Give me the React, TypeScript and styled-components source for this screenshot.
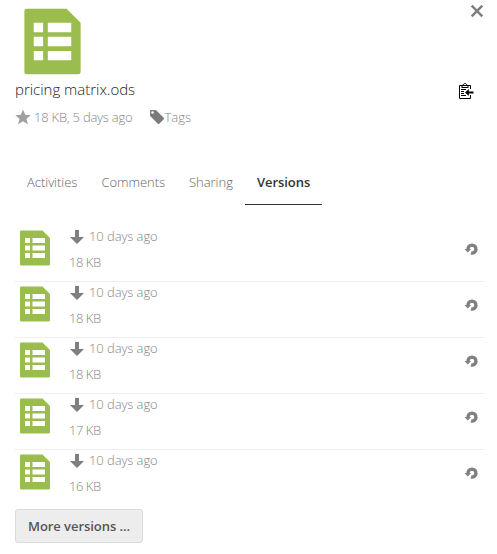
import React from 'react';
import styled, { createGlobalStyle } from 'styled-components';

const GlobalStyle = createGlobalStyle`
  * { box-sizing: border-box; }
  body {
    margin: 0;
    background: #fff;
    font-family: 'Open Sans', sans-serif;
    font-size: 13px;
    font-weight: 300;
    color: #222;
  }
`;

const Sidebar = styled.aside`
  width: 497px;
  height: 554px;
  padding: 4px 13px 0 15px;
  display: flex;
  flex-direction: column;
  overflow: hidden;
`;

const Header = styled.header`
  display: flex;
  justify-content: space-between;
  height: 74px;
`;

const IconButton = styled.button`
  display: flex;
  align-items: flex-start;
  padding: 0;
  border: 0;
  background: none;
  color: #7f7f7f;
`;

const TitleRow = styled.div`
  display: flex;
  justify-content: space-between;
  height: 27px;
  padding-right: 10px;
`;

const FileName = styled.h3`
  margin: 0;
  font-size: 15px;
  font-weight: 300;
  letter-spacing: -0.02px;
  line-height: 22px;
`;

const ClipButton = styled(IconButton)`
  padding-top: 5px;
`;

const Details = styled.div`
  display: flex;
  align-items: center;
  height: 24px;
  color: #858585;
`;

const Detail = styled.span<{ $gap: number; $tracking?: number }>`
  display: flex;
  align-items: center;
  gap: ${(p) => p.$gap}px;
  margin-right: 17px;
  letter-spacing: ${(p) => p.$tracking ?? 0}px;
  white-space: nowrap;

  svg { flex: none; }
`;

const Tabs = styled.nav`
  display: flex;
  height: 45px;
  margin-top: 31px;
`;

const Tab = styled.button<{ $active?: boolean }>`
  padding: 0 12px 1px;
  border: 0;
  border-bottom: 1px solid ${(p) => (p.$active ? '#333' : 'transparent')};
  background: none;
  font: inherit;
  font-weight: ${(p) => (p.$active ? 600 : 300)};
  letter-spacing: ${(p) => (p.$active ? -0.04 : -0.03)}px;
  color: ${(p) => (p.$active ? '#333' : '#666')};
`;

const VersionList = styled.ul`
  margin: 21px 0 0;
  padding: 0;
  list-style: none;
`;

const Version = styled.li`
  display: flex;
  height: 56px;
  border-bottom: 1px solid #eee;
  color: #858585;

  &:last-child { border-bottom-color: transparent; }
`;

const Preview = styled.div`
  width: 54px;
  padding-top: 2px;
`;

const VersionInfo = styled.div`
  flex: 1;
  line-height: 20px;
`;

const Age = styled.div`
  display: flex;
  align-items: center;
  gap: 4px;
  height: 20px;
  margin-bottom: 6px;
  letter-spacing: -0.08px;

  svg { margin-top: 1px; }
`;

const FileSize = styled.div`
  letter-spacing: -0.45px;
`;

const RestoreButton = styled(IconButton)`
  padding: 15px 5px 0 0;
`;

const MoreButton = styled.button`
  align-self: flex-start;
  width: 128px;
  height: 34px;
  margin-top: 3px;
  padding: 0 0 1px;
  border: 1px solid #dbdbdb;
  border-radius: 3px;
  background: #ededed;
  color: #555;
  font: inherit;
  font-weight: 600;
  letter-spacing: -0.06px;
  white-space: nowrap;
`;

const SheetIcon = ({ size }: { size: number }) => (
  <svg width={size} height={size} viewBox="0 0 16 16" display="block">
    <path
      fill="#9abd4e"
      fillRule="evenodd"
      d="M2.5 1a.5.5 0 0 0-.5.5v13a.5.5 0 0 0 .5.5h11a.5.5 0 0 0 .5-.5V4l-3-3zM4 4h2v2H4zM7 4h5v2H7zM4 7h2v2H4zM7 7h5v2H7zM4 10h2v2H4zM7 10h5v2H7z"
    />
  </svg>
);

const CloseIcon = () => (
  <svg width="14" height="14" viewBox="0 0 14 14">
    <path d="M1.7 1.7 12.3 12.3M12.3 1.7 1.7 12.3" stroke="#7f7f7f" strokeWidth="2.5" />
  </svg>
);

const ClipboardIcon = () => (
  <svg width="16" height="16" viewBox="0 0 16 16" fill="none" stroke="#000">
    <path d="M12.5 6V2.5H1.5v13h11V12" />
    <path d="M3.5 4.500h7M4 4V2.500h1.200C5.200 1.100 6 .5 7 .5s1.800.6 1.800 2H10V4" />
    <path d="M3 6.500h5M3 8.500h3M3 10.500h3M3 12.500h5" />
    <path d="M9 9.500h6.500" strokeWidth="2" />
    <path d="M7 9.500 10.800 6v7z" fill="#000" stroke="none" />
  </svg>
);

const StarIcon = () => (
  <svg width="16" height="16" viewBox="0 0 16 16">
    <path fill="#a0a0a0" d="m8 .6 2.200 5.200 5.500.4-4.200 3.600 1.400 5.500L8 12.300l-4.900 3 1.400-5.500L.3 6.200l5.500-.4z" />
  </svg>
);

const TagIcon = () => (
  <svg width="15" height="16" viewBox="0 0 15 16">
    <path
      fill="#7b7b7b"
      fillRule="evenodd"
      d="M2 1h4.300c.5 0 .9.200 1.200.5l7 7c.7.7.7 1.200 0 1.900l-4 4c-.7.7-1.200.7-1.900 0l-7-7C1.200 7 1 6.700 1 6.200V2c0-.6.4-1 1-1zm1.500 1.200a1.300 1.300 0 1 0 0 2.600 1.300 1.300 0 0 0 0-2.600z"
    />
  </svg>
);

const DownloadIcon = () => (
  <svg width="16" height="16" viewBox="0 0 16 16">
    <path fill="#7f7f7f" d="M6 1h4v7h5l-7 7-7-7h5z" />
  </svg>
);

const RestoreIcon = () => (
  <svg width="16" height="16" viewBox="0 0 16 16">
    <path d="M5 8.600A4 4 0 1 1 8 12" fill="none" stroke="#7f7f7f" strokeWidth="3.400" />
    <path d="M1.500 8h6.500L4.800 11.600z" fill="#7f7f7f" />
  </svg>
);

const tabs = ['Activities', 'Comments', 'Sharing', 'Versions'];
const sizes = ['18 KB', '18 KB', '18 KB', '17 KB', '16 KB'];

export default function App() {
  return (
    <Sidebar>
      <GlobalStyle />
      <Header>
        <SheetIcon size={75} />
        <IconButton aria-label="Close"><CloseIcon /></IconButton>
      </Header>
      <TitleRow>
        <FileName>pricing matrix.ods</FileName>
        <ClipButton aria-label="Copy link"><ClipboardIcon /></ClipButton>
      </TitleRow>
      <Details>
        <Detail $gap={3} $tracking={-0.22}><StarIcon />18 KB, 5 days ago</Detail>
        <Detail $gap={0}><TagIcon />Tags</Detail>
      </Details>
      <Tabs>
        {tabs.map((name) => (
          <Tab key={name} $active={name === 'Versions'}>{name}</Tab>
        ))}
      </Tabs>
      <VersionList>
        {sizes.map((size, i) => (
          <Version key={i}>
            <Preview><SheetIcon size={40} /></Preview>
            <VersionInfo>
              <Age><DownloadIcon />10 days ago</Age>
              <FileSize>{size}</FileSize>
            </VersionInfo>
            <RestoreButton aria-label="Restore"><RestoreIcon /></RestoreButton>
          </Version>
        ))}
      </VersionList>
      <MoreButton>More versions ...</MoreButton>
    </Sidebar>
  );
}
